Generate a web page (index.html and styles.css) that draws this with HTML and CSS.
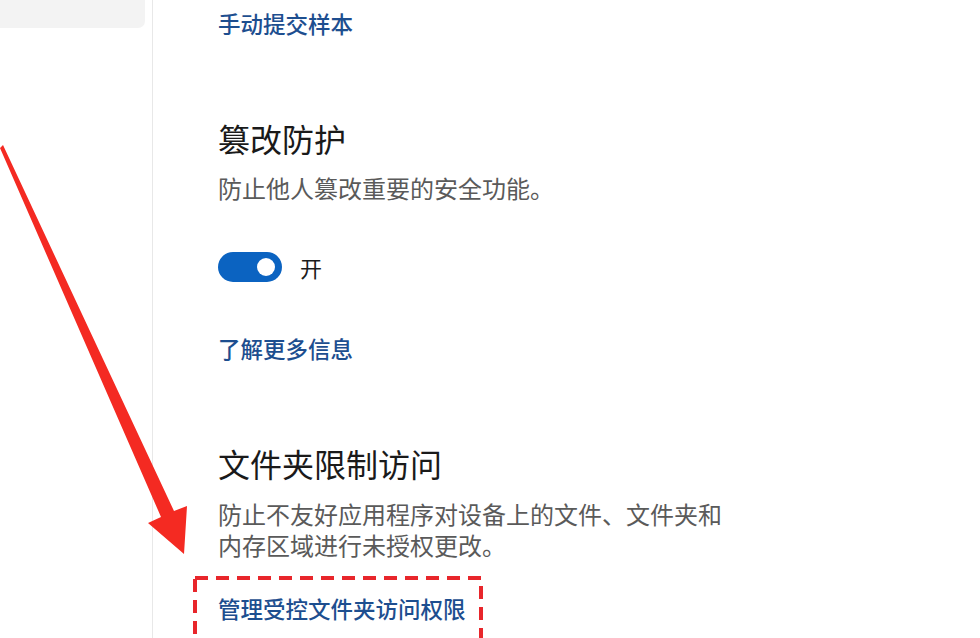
FILE: index.html
```html
<!DOCTYPE html>
<html lang="zh-CN">
<head>
<meta charset="utf-8">
<title>病毒和威胁防护设置</title>
<link rel="stylesheet" href="styles.css">
</head>
<body>
<div class="page">
  <aside class="sidebar">
    <div class="side-item"></div>
  </aside>
  <main class="content">
    <a class="link first-link" href="#">手动提交样本</a>

    <section class="section">
      <h2 class="title">篡改防护</h2>
      <p class="desc">防止他人篡改重要的安全功能。</p>
      <div class="toggle-row">
        <span class="toggle"><span class="knob"></span></span>
        <span class="toggle-label">开</span>
      </div>
      <a class="link more-link" href="#">了解更多信息</a>
    </section>

    <section class="section">
      <h2 class="title">文件夹限制访问</h2>
      <p class="desc wrap">防止不友好应用程序对设备上的文件、文件夹和内存区域进行未授权更改。</p>
      <a class="link manage-link" href="#">管理受控文件夹访问权限</a>
    </section>
  </main>

  <svg class="annotation" width="980" height="638" viewBox="0 0 980 638" aria-hidden="true">
    <polygon points="0,148 3,145 174,511 187,506 184,554 148,523 161,517" fill="#f42a22"/>
    <rect x="195" y="578" width="286" height="120" fill="none" stroke="#e8262b" stroke-width="4" stroke-dasharray="13 8"/>
  </svg>
</div>
</body>
</html>
```

FILE: styles.css
```css
* {
  box-sizing: border-box;
}

html, body {
  margin: 0;
  padding: 0;
  background: #ffffff;
}

body {
  font-family: "Noto Sans CJK SC", "Noto Sans", sans-serif;
  color: #1b1b1b;
}

.page {
  position: relative;
  width: 980px;
  height: 638px;
  overflow: hidden;
  display: flex;
}

.sidebar {
  width: 153px;
  flex: none;
  border-right: 1px solid #e8e8e8;
}

.side-item {
  width: 145px;
  height: 28px;
  background: #f3f3f3;
  border-bottom-right-radius: 7px;
}

.content {
  flex: 1;
  padding: 8px 0 0 65px;
  display: flex;
  flex-direction: column;
  align-items: flex-start;
}

.link {
  display: block;
  font-size: 22.5px;
  line-height: 30px;
  color: #1d4e8f;
  text-decoration: none;
  font-weight: 500;
}

.section {
  display: flex;
  flex-direction: column;
  align-items: flex-start;
}

.title {
  margin: 78px 0 0;
  font-size: 32px;
  line-height: 44px;
  font-weight: 400;
  color: #1a1a1a;
}

.desc {
  margin: 12px 0 0;
  font-size: 24px;
  line-height: 31px;
  color: #5a5a5a;
}

.desc.wrap {
  margin-top: 13px;
  max-width: 520px;
}

.toggle-row {
  margin-top: 49px;
  display: flex;
  align-items: center;
  gap: 18px;
  height: 30px;
}

.toggle {
  width: 64px;
  height: 30px;
  border-radius: 15px;
  background: #0b63c1;
  display: flex;
  align-items: center;
  justify-content: flex-end;
  padding-right: 7px;
}

.knob {
  width: 18px;
  height: 18px;
  border-radius: 50%;
  background: #ffffff;
}

.toggle-label {
  font-size: 22px;
  line-height: 30px;
  color: #1b1b1b;
}

.more-link {
  margin-top: 51px;
}

.manage-link {
  margin-top: 33px;
}

.annotation {
  position: absolute;
  left: 0;
  top: 0;
  pointer-events: none;
}
```
